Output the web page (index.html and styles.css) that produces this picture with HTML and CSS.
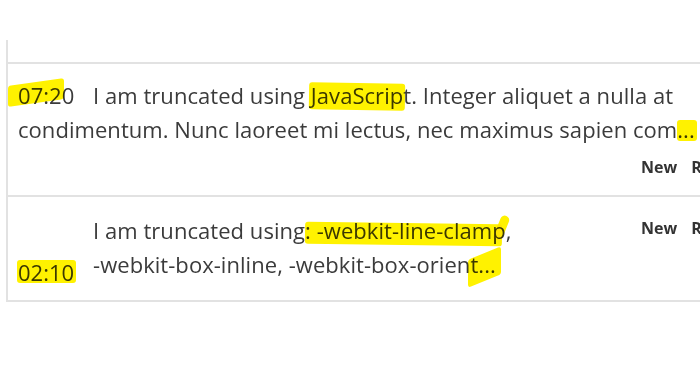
FILE: index.html
```html
<!DOCTYPE html>
<html>
<head>
<meta charset="utf-8">
<link rel="stylesheet" href="styles.css">
</head>
<body>
<div class="list">
  <div class="item item-stub"></div>
  <div class="item item-js">
    <p class="msg"><span class="time"><mark class="hl hl-time1">07:20</mark></span>I am truncated using <mark class="hl hl-js">JavaScript</mark>. Integer aliquet a nulla at<br>condimentum. Nunc laoreet mi lectus, nec maximus sapien com<mark class="hl hl-dots">...</mark></p>
    <div class="actions"><span class="act">New</span><span class="act">Reply</span></div>
  </div>
  <div class="item item-css">
    <div class="time-col"><mark class="hl hl-time2">02:10</mark></div>
    <p class="msg clamp">I am truncated using<mark class="hl hl-clamp">: -webkit-line-clamp</mark>,<br>-webkit-box-inline, -webkit-box-orien<mark class="hl hl-tail">t...</mark></p>
    <div class="actions"><span class="act">New</span><span class="act">Reply</span></div>
  </div>
</div>
</body>
</html>
```

FILE: styles.css
```css
html, body {
  margin: 0;
  background: #fff;
  overflow: hidden;
}
body {
  font-family: "Open Sans", "Noto Sans", sans-serif;
  color: #3b3b3b;
  width: 700px;
  height: 390px;
}
.list {
  margin: 40px 0 0 6px;
  width: 800px;
  border-left: 2px solid #e2e2e2;
}
.item {
  border-bottom: 2px solid #e2e2e2;
}
.item-stub {
  height: 22px;
}
.msg {
  margin: 0;
  font-size: 22px;
  line-height: 34px;
  letter-spacing: 0.05px;
  white-space: nowrap;
}
.item-js {
  padding: 14px 0 18px 10px;
}
.time {
  display: inline-block;
  width: 75px;
}
.actions {
  display: flex;
  gap: 14px;
  font-size: 16px;
  font-weight: 700;
  line-height: 20px;
  color: #333;
}
.item-js .actions {
  margin-top: 11px;
  padding-left: 623px;
}
.item-css {
  display: grid;
  grid-template-columns: 75px 548px auto;
  padding: 16px 0 11px 10px;
}
.time-col {
  align-self: end;
  font-size: 22px;
  line-height: 34px;
}
.clamp {
  padding-bottom: 8px;
}
.item-css .actions {
  margin-top: 5px;
  align-self: start;
}
mark.hl {
  background: none;
  color: inherit;
  position: relative;
}
mark.hl::before {
  content: "";
  position: absolute;
  background: #fff200;
  mix-blend-mode: multiply;
  border-radius: 3px;
}
.hl-time1::before {
  left: -10px; right: 10px; top: 2px; bottom: 7px;
  border-radius: 2px 6px 2px 2px;
  transform: skewY(-8deg);
}
.hl-js::before {
  left: -2px; right: 6px; top: 3px; bottom: 0;
  border-radius: 4px 2px 6px 2px;
  transform: rotate(1deg);
}
.hl-dots::before {
  left: 0; right: -2px; top: 6px; bottom: 3px;
}
.hl-clamp::before {
  left: 0; right: 4px; top: 8px; bottom: 0;
  border-radius: 2px 4px 14px 8px;
  transform: rotate(0.8deg);
}
.hl-clamp::after {
  content: "";
  position: absolute;
  right: 0;
  top: 0;
  width: 9px;
  height: 26px;
  background: #fff200;
  mix-blend-mode: multiply;
  border-radius: 6px 6px 8px 3px;
  transform: rotate(22deg);
}
.hl-tail::before {
  left: -2px; right: -6px; top: 4px; bottom: -2px;
  border-radius: 2px 12px 4px 8px;
  transform: skewY(-22deg);
}
.hl-time2::before {
  left: -1px; right: -2px; top: 3px; bottom: 4px;
  border-radius: 4px;
}
```
